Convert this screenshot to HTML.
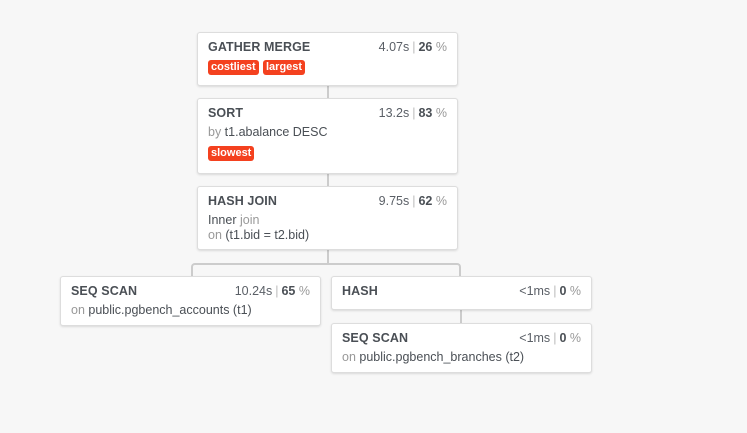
<!DOCTYPE html>
<html><head><style>
body{margin:0;width:747px;height:433px;background:#f7f7f7;font-family:"Liberation Sans",sans-serif;position:relative;overflow:hidden;color:#4a4f55}
.n{position:absolute;background:#fff;border:1px solid #ddd;border-radius:3px;box-shadow:0 1px 2px rgba(0,0,0,.12);box-sizing:border-box;width:261px;padding:7px 10px 0 10px;font-size:12px}
.t{font-weight:bold;font-size:12.5px;letter-spacing:.1px;color:#4a4f55}
.r{position:absolute;right:10px;top:7px;color:#5a5f66;font-size:12.5px}
.r b{color:#4a4f55}.r i{font-style:normal;color:#999}.r s{text-decoration:none;color:#bbb;margin:0 3px}
.g{color:#999}
.d{margin-top:5px;line-height:15px;font-size:12.5px}
.tag{display:inline-block;background:#f4411f;color:#fff;font-weight:bold;font-size:11px;border-radius:3px;padding:1px 3px 2px;margin-right:1px}
.l{position:absolute;background:#ccc}
</style></head><body>
<div class="l" style="left:327px;top:85px;width:2px;height:13px"></div>
<div class="l" style="left:327px;top:174px;width:2px;height:12px"></div>
<div class="l" style="left:327px;top:250px;width:2px;height:14px"></div>
<div style="position:absolute;left:191px;top:263px;width:266px;height:14px;border:2px solid #ccc;border-bottom:none;border-radius:4px 4px 0 0"></div>
<div class="l" style="left:460px;top:309px;width:2px;height:14px"></div>

<div class="n" style="left:197px;top:32px;height:54px"><div class="t">GATHER MERGE</div><div class="r">4.07s<s>|</s><b>26</b> <i>%</i></div><div style="margin-top:5px"><span class="tag">costliest</span> <span class="tag">largest</span></div></div>
<div class="n" style="left:197px;top:98px;height:76px"><div class="t">SORT</div><div class="r">13.2s<s>|</s><b>83</b> <i>%</i></div><div class="d"><span class="g">by</span> t1.abalance DESC</div><div style="margin-top:5px"><span class="tag">slowest</span></div></div>
<div class="n" style="left:197px;top:186px;height:64px"><div class="t">HASH JOIN</div><div class="r">9.75s<s>|</s><b>62</b> <i>%</i></div><div class="d">Inner <span class="g">join</span><br><span class="g">on</span> (t1.bid = t2.bid)</div></div>
<div class="n" style="left:60px;top:276px;height:50px"><div class="t">SEQ SCAN</div><div class="r">10.24s<s>|</s><b>65</b> <i>%</i></div><div class="d"><span class="g">on</span> public.pgbench_accounts (t1)</div></div>
<div class="n" style="left:331px;top:276px;height:34px"><div class="t">HASH</div><div class="r">&lt;1ms<s>|</s><b>0</b> <i>%</i></div></div>
<div class="n" style="left:331px;top:323px;height:50px"><div class="t">SEQ SCAN</div><div class="r">&lt;1ms<s>|</s><b>0</b> <i>%</i></div><div class="d"><span class="g">on</span> public.pgbench_branches (t2)</div></div>
</body></html>
